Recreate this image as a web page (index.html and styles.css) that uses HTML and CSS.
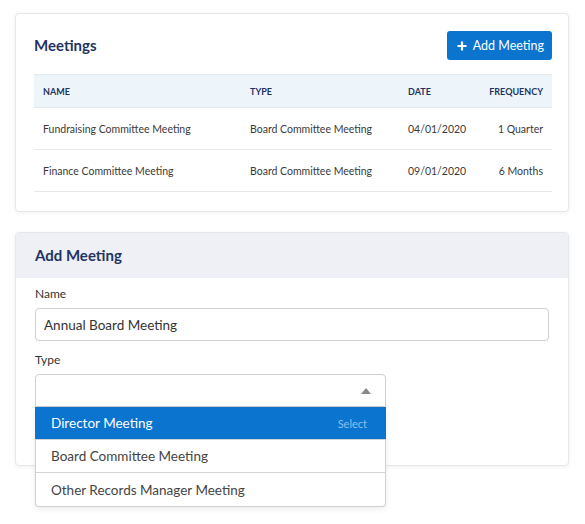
FILE: index.html
```html
<!DOCTYPE html>
<html lang="en">
<head>
  <meta charset="UTF-8">
  <meta name="viewport" content="width=device-width, initial-scale=1.0">
  <title>Meetings</title>
  <link rel="stylesheet" href="styles.css">
</head>
<body>
  <div class="card meetings">
    <div class="card-top">
      <h2>Meetings</h2>
      <button class="btn-primary">
        <svg width="10" height="10" viewBox="0 0 10 10"><path d="M5 0.5v9M0.5 5h9" stroke="#fff" stroke-width="2.2"/></svg>
        Add Meeting
      </button>
    </div>
    <table class="meeting-table">
      <thead>
        <tr>
          <th class="col-name">Name</th>
          <th class="col-type">Type</th>
          <th class="col-date">Date</th>
          <th class="col-freq">Frequency</th>
        </tr>
      </thead>
      <tbody>
        <tr>
          <td>Fundraising Committee Meeting</td>
          <td>Board Committee Meeting</td>
          <td>04/01/2020</td>
          <td class="col-freq">1 Quarter</td>
        </tr>
        <tr>
          <td>Finance Committee Meeting</td>
          <td>Board Committee Meeting</td>
          <td>09/01/2020</td>
          <td class="col-freq">6 Months</td>
        </tr>
      </tbody>
    </table>
  </div>

  <div class="card add-form">
    <div class="card-header">
      <h2>Add Meeting</h2>
    </div>
    <div class="card-body">
      <label class="field-label">Name</label>
      <input class="text-input" type="text" value="Annual Board Meeting">
      <label class="field-label">Type</label>
      <div class="select-wrap">
        <div class="select-box">
          <span class="caret"></span>
        </div>
        <ul class="options">
          <li class="active">Director Meeting <span class="hint">Select</span></li>
          <li>Board Committee Meeting</li>
          <li>Other Records Manager Meeting</li>
        </ul>
      </div>
    </div>
  </div>
</body>
</html>
```

FILE: styles.css
```css
html {
  height: 100%;
}

body {
  box-sizing: border-box;
  min-height: 100%;
  margin: 0;
  padding: 13px 16px 0 15px;
  background-color: #fff;
  font-family: 'Lato', 'Open Sans', sans-serif;
  color: #3a3a3a;
}

.card {
  background-color: #fff;
  border: 1px solid #e4e7ec;
  border-radius: 4px;
  box-shadow: 0 1px 4px rgba(0, 0, 0, 0.06);
}

h2 {
  margin: 0;
  font-size: 15px;
  font-weight: bold;
  color: #1f3461;
}

/* meetings list */
.meetings {
  padding: 17px 16px 19px 18px;
  margin-bottom: 20px;
}

.card-top {
  display: flex;
  justify-content: space-between;
  align-items: center;
  margin-bottom: 14px;
}

.card-top h2 {
  margin-top: -2px;
}

.btn-primary {
  display: flex;
  align-items: center;
  gap: 6px;
  height: 29px;
  padding: 0 8px 0 10px;
  background-color: #0a74cf;
  color: #fff;
  border: none;
  border-radius: 3px;
  font-family: inherit;
  font-size: 12.5px;
  cursor: pointer;
}

.meeting-table {
  width: 100%;
  border-collapse: collapse;
  font-size: 10.5px;
}

.meeting-table th {
  height: 32px;
  background-color: #eef5fa;
  border-top: 1px solid #e3e9ee;
  text-align: left;
  text-transform: uppercase;
  font-size: 9px;
  font-weight: bold;
  color: #1f3461;
}

.meeting-table td {
  height: 41px;
  border-top: 1px solid #e6e9ec;
  border-bottom: 1px solid #e6e9ec;
}

.meeting-table th,
.meeting-table td {
  padding: 0 9px;
}

.col-name { width: 189px; }
.col-type { width: 140px; }
.col-date { width: 62px; }

.meeting-table .col-freq {
  text-align: right;
}

/* add meeting form */
.card-header {
  box-sizing: border-box;
  height: 45px;
  display: flex;
  align-items: center;
  padding: 0 19px 2px;
  background-color: #eff0f5;
  border-radius: 4px 4px 0 0;
}

.card-body {
  padding: 8px 19px 58px;
}

.field-label {
  display: block;
  font-size: 12px;
  color: #333;
  margin-bottom: 7px;
}

.text-input {
  display: block;
  box-sizing: border-box;
  width: 100%;
  height: 33px;
  padding: 0 8px;
  margin-bottom: 11px;
  border: 1px solid #cfcfcf;
  border-radius: 4px;
  font-family: inherit;
  font-size: 13.5px;
  color: #333;
}

.select-wrap {
  position: relative;
  width: 351px;
}

.select-box {
  box-sizing: border-box;
  height: 33px;
  border: 1px solid #cfcfcf;
  border-radius: 4px 4px 0 0;
  display: flex;
  align-items: center;
  justify-content: flex-end;
  padding-right: 14px;
}

.caret {
  width: 0;
  height: 0;
  border-left: 5px solid transparent;
  border-right: 5px solid transparent;
  border-bottom: 6px solid #888;
}

.options {
  position: absolute;
  z-index: 2;
  left: 0;
  right: 0;
  top: 33px;
  margin: 0;
  padding: 0;
  list-style: none;
  background-color: #fff;
  border: 1px solid #cfcfcf;
  border-top: none;
  border-radius: 0 0 4px 4px;
  box-shadow: 0 2px 6px rgba(0, 0, 0, 0.08);
}

.options li {
  box-sizing: border-box;
  display: flex;
  justify-content: space-between;
  align-items: center;
  height: 33px;
  padding: 0 18px 0 15px;
  font-size: 13.5px;
  color: #444;
  border-bottom: 1px solid #d4d4d4;
}

.options li:last-child {
  border-bottom: none;
}

.options li.active {
  background-color: #0a74cf;
  color: #fff;
  margin: 0 -1px;
  padding-left: 16px;
  padding-right: 19px;
}

.hint {
  font-size: 11px;
  color: #8fc0ec;
}
```
